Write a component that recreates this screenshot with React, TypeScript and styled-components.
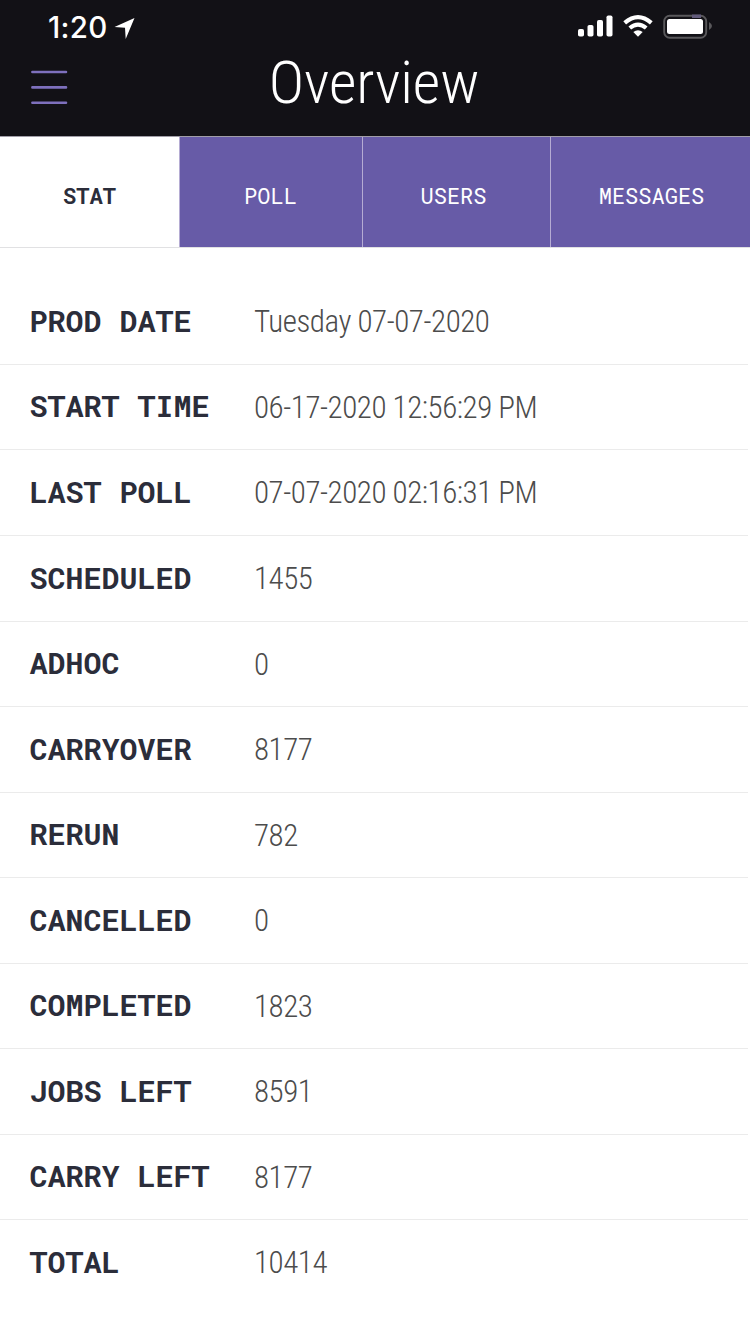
import React from "react";
import styled, { createGlobalStyle } from "styled-components";

const GlobalStyle = createGlobalStyle`
  * { box-sizing: border-box; }
  html, body { margin: 0; padding: 0; background: #fff; }
`;

const condensed = `"Roboto Condensed", Roboto, sans-serif`;
const mono = `"Roboto Mono", "DejaVu Sans Mono", monospace`;

const Screen = styled.main`
  width: 750px;
  height: 1334px;
  overflow: hidden;
  display: flex;
  flex-direction: column;
  background: #fff;
`;

const Header = styled.header`
  height: 136px;
  flex: none;
  background: #121116;
  color: #fff;
`;

const StatusBar = styled.div`
  height: 52px;
  display: flex;
  justify-content: space-between;
  padding: 0 38px 0 48px;
`;

const Clock = styled.div`
  display: flex;
  font: 540 29.5px/36px Inter, sans-serif;
  font-feature-settings: "calt" 0;
  letter-spacing: 0.3px;
  padding-top: 9px;
`;

const ArrowSlot = styled.span`
  padding: 8px 0 0 6px;
  line-height: 0;
`;

const TitleBar = styled.div`
  height: 84px;
  display: grid;
  grid-template-columns: 98px 1fr 100px;
`;

const MenuButton = styled.button`
  border: 0;
  padding: 17px 0 0 30px;
  background: none;
  display: flex;
  align-items: flex-start;
`;

const Title = styled.h1`
  margin: 0;
  padding-top: 1px;
  font: 300 60px/60px ${condensed};
  letter-spacing: -0.12px;
  text-align: center;
`;

const Tabs = styled.nav`
  height: 112px;
  flex: none;
  display: grid;
  grid-template-columns: 180px 183px 188px 199px;
  border-top: 1px solid #a19ea8;
  border-bottom: 1px solid #e1e1e3;
`;

const Tab = styled.button<{ $active?: boolean; $shift?: number }>`
  border: 0;
  border-right: 1px solid #b5acd3;
  padding: 8px ${(p) => Math.max(0, -(p.$shift ?? 0))}px 0 ${(p) => Math.max(0, p.$shift ?? 0)}px;
  background: ${(p) => (p.$active ? "#fff" : "#675ba7")};
  color: ${(p) => (p.$active ? "#2b2d3a" : "#fff")};
  font: ${(p) => (p.$active ? 700 : 400)} 22px/28px ${mono};
  &:last-child { border-right: 0; }
`;

const Stats = styled.dl`
  margin: 0;
  padding-top: 31.4px;
`;

const Row = styled.div`
  height: 85.54px;
  width: 748px;
  display: grid;
  grid-template-columns: 224px 1fr;
  padding-left: 30px;
  border-bottom: 1px solid #ebebeb;
  &:last-child { border-bottom: 0; }
`;

const Label = styled.dt`
  font: 700 30px/36px ${mono};
  color: #2b2d3a;
  margin-left: -0.5px;
  padding-top: 23.56px;
  white-space: pre;
`;

const Value = styled.dd`
  margin: 0;
  font: 300 31px/36px ${condensed};
  letter-spacing: -0.46px;
  color: #4c4c4c;
  padding-top: 25px;
`;

const rows = [
  ["PROD DATE", "Tuesday 07-07-2020"],
  ["START TIME", "06-17-2020 12:56:29 PM"],
  ["LAST POLL", "07-07-2020 02:16:31 PM"],
  ["SCHEDULED", "1455"],
  ["ADHOC", "0"],
  ["CARRYOVER", "8177"],
  ["RERUN", "782"],
  ["CANCELLED", "0"],
  ["COMPLETED", "1823"],
  ["JOBS LEFT", "8591"],
  ["CARRY LEFT", "8177"],
  ["TOTAL", "10414"],
];

const LocationArrow = () => (
  <svg width="22" height="24" viewBox="0 0 22 24">
    <path d="M20.5 1 L0.5 10 L11 10.7 L11.7 22 Z" fill="#fff" />
  </svg>
);

const StatusIcons = () => (
  <svg width="136" height="44" viewBox="576 0 136 44">
    <g fill="#fff">
      <rect x="578" y="29" width="6" height="7.5" rx="1.8" />
      <rect x="587.5" y="25" width="6" height="11.5" rx="1.8" />
      <rect x="597" y="20" width="6" height="16.5" rx="1.8" />
      <rect x="606.5" y="15.5" width="6" height="21" rx="1.8" />
      <path d="M638 36.8 L633.3 32.1 Q638 28.6 642.7 32.1 Z" />
    </g>
    <g fill="none" stroke="#fff" strokeWidth="4.2">
      <path d="M624.7 22.8 Q638 11.4 651.3 22.8" />
      <path d="M629.8 28 Q638 21.2 646.2 28" />
    </g>
    <rect x="664.2" y="15.7" width="42" height="22" rx="5.5" fill="none" stroke="#59585b" strokeWidth="1.9" />
    <rect x="692" y="14.5" width="9" height="3.5" fill="#625b7b" />
    <rect x="667" y="19" width="36" height="15" rx="2.5" fill="#fff" />
    <path d="M709 22 Q712 24 712 26 Q712 28 709 30 Z" fill="#59585b" />
  </svg>
);

export default function App() {
  return (
    <Screen>
      <GlobalStyle />
      <Header>
        <StatusBar>
          <Clock>
            1:20
            <ArrowSlot><LocationArrow /></ArrowSlot>
          </Clock>
          <StatusIcons />
        </StatusBar>
        <TitleBar>
          <MenuButton aria-label="Menu">
            <svg width="38" height="38" viewBox="0 0 38 38" stroke="#7e70bd" strokeWidth="2.6" strokeLinecap="round">
              <path d="M2.4 3H36M2.4 18.4H36M2.4 33.8H36" />
            </svg>
          </MenuButton>
          <Title>Overview</Title>
        </TitleBar>
      </Header>
      <Tabs>
        <Tab $active>STAT</Tab>
        <Tab $shift={-1}>POLL</Tab>
        <Tab $shift={-6}>USERS</Tab>
        <Tab $shift={2}>MESSAGES</Tab>
      </Tabs>
      <Stats>
        {rows.map(([label, value]) => (
          <Row key={label}>
            <Label>{label}</Label>
            <Value>{value}</Value>
          </Row>
        ))}
      </Stats>
    </Screen>
  );
}
